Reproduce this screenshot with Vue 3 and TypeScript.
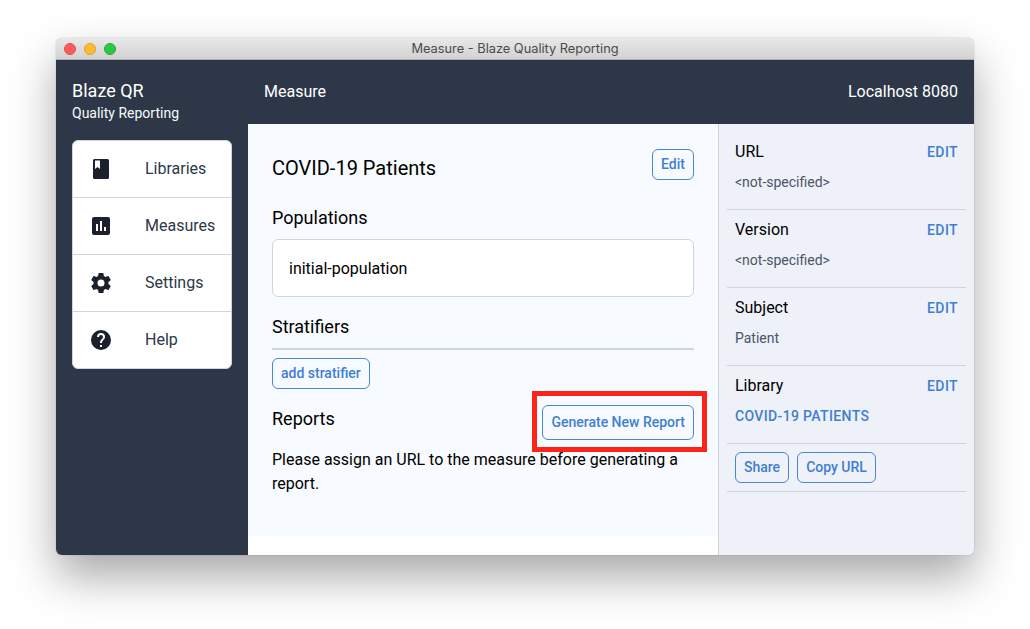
<script setup lang="ts">
const navItems = [
  { label: "Libraries", icon: "book" },
  { label: "Measures", icon: "chart" },
  { label: "Settings", icon: "cog" },
  { label: "Help", icon: "help" },
];

const fields = [
  { title: "URL", value: "<not-specified>", link: false },
  { title: "Version", value: "<not-specified>", link: false },
  { title: "Subject", value: "Patient", link: false },
  { title: "Library", value: "COVID-19 PATIENTS", link: true },
];
</script>

<template>
  <div class="page">
    <div class="window">
      <div class="titlebar">
        <div class="lights">
          <span class="light red"></span>
          <span class="light yellow"></span>
          <span class="light green"></span>
        </div>
        <span class="window-title">Measure - Blaze Quality Reporting</span>
      </div>

      <div class="app">
        <aside class="sidebar">
          <div class="brand">
            <div class="brand-name">Blaze QR</div>
            <div class="brand-sub">Quality Reporting</div>
          </div>
          <nav class="nav">
            <a v-for="item in navItems" :key="item.label" class="nav-item">
              <span class="nav-icon">
                <svg v-if="item.icon === 'book'" width="24" height="24" viewBox="0 0 24 24">
                  <path fill-rule="evenodd" d="M5.500 2h13A1.500 1.500 0 0 1 20 3.500v17a1.500 1.500 0 0 1-1.500 1.500h-13A1.500 1.500 0 0 1 4 20.500v-17A1.500 1.500 0 0 1 5.500 2zM6 3.500V12l2.500-2 2.500 2V3.500z" />
                </svg>
                <svg v-else-if="item.icon === 'chart'" width="24" height="24" viewBox="0 0 24 24">
                  <path fill-rule="evenodd" d="M5 3h14a2 2 0 0 1 2 2v14a2 2 0 0 1-2 2H5a2 2 0 0 1-2-2V5a2 2 0 0 1 2-2zm2 7v7h2v-7zm4-3v10h2V7zm4 6v4h2v-4z" />
                </svg>
                <svg v-else-if="item.icon === 'cog'" width="24" height="24" viewBox="0 0 24 24">
                  <path fill-rule="evenodd" d="M19.430 12.980c.04-.32.07-.64.07-.98s-.03-.66-.07-.98l2.110-1.650c.19-.15.24-.42.120-.64l-2-3.460c-.12-.22-.39-.30-.61-.22l-2.490 1c-.52-.40-1.080-.73-1.690-.98l-.38-2.650A.488.488 0 0 0 14 2h-4c-.25 0-.46.18-.49.42l-.38 2.650c-.61.25-1.170.59-1.690.98l-2.490-1c-.23-.09-.49 0-.61.22l-2 3.460c-.13.22-.07.49.12.64l2.110 1.650c-.04.32-.07.65-.07.98s.03.66.07.98l-2.110 1.650c-.19.15-.24.42-.12.64l2 3.460c.12.22.39.30.61.22l2.490-1c.52.40 1.080.73 1.690.98l.38 2.650c.03.24.24.42.49.42h4c.25 0 .46-.18.49-.42l.38-2.650c.61-.25 1.170-.59 1.690-.98l2.490 1c.23.09.49 0 .61-.22l2-3.460c.12-.22.07-.49-.12-.64zM12 15.500a3.500 3.500 0 1 1 0-7 3.500 3.500 0 0 1 0 7z" />
                </svg>
                <svg v-else width="24" height="24" viewBox="0 0 24 24">
                  <path d="M12 2a10 10 0 1 0 0 20 10 10 0 0 0 0-20zm1 17h-2v-2h2zm2.070-7.750-.9.920C13.450 12.900 13 13.500 13 15h-2v-.5c0-1.100.45-2.100 1.170-2.830l1.240-1.260A1.960 1.960 0 0 0 14 9a2 2 0 1 0-4 0H8a4 4 0 1 1 8 0c0 .88-.36 1.680-.93 2.250z" />
                </svg>
              </span>
              <span class="nav-label">{{ item.label }}</span>
            </a>
          </nav>
        </aside>

        <div class="content">
          <header class="topbar">
            <span class="page-name">Measure</span>
            <span class="server">Localhost 8080</span>
          </header>

          <div class="panes">
            <main class="main">
              <div class="main-inner">
                <div class="title-row">
                  <h1 class="title">COVID-19 Patients</h1>
                  <button class="btn edit-btn">Edit</button>
                </div>

                <h2 class="section pop-heading">Populations</h2>
                <div class="pop-box">initial-population</div>

                <h2 class="section strat-heading">Stratifiers</h2>
                <button class="btn add-btn">add stratifier</button>

                <div class="reports-row">
                  <h2 class="section reports-heading">Reports</h2>
                  <button class="btn report-btn">Generate New Report</button>
                </div>
                <p class="notice">Please assign an URL to the measure before generating a report.</p>
              </div>
              <div class="highlight"></div>
            </main>

            <aside class="details">
              <div v-for="field in fields" :key="field.title" class="field">
                <div class="field-head">
                  <span class="field-title">{{ field.title }}</span>
                  <a class="edit-link">EDIT</a>
                </div>
                <div :class="field.link ? 'field-link' : 'field-value'">{{ field.value }}</div>
              </div>
              <div class="actions">
                <button class="btn">Share</button>
                <button class="btn">Copy URL</button>
              </div>
            </aside>
          </div>
        </div>
      </div>
    </div>
  </div>
</template>

<style>
html,
body {
  margin: 0;
  background: #ffffff;
}
</style>

<style scoped>
.page {
  box-sizing: border-box;
  height: 629px;
  padding: 38px 56px 0;
  overflow: hidden;
}
.window {
  box-sizing: border-box;
  width: 918px;
  height: 517px;
  border-radius: 6px;
  overflow: hidden;
  display: flex;
  flex-direction: column;
  font-family: Roboto, "Liberation Sans", sans-serif;
  color: #000000;
  box-shadow: 0 22px 45px rgba(0, 0, 0, 0.34), 0 0 1px rgba(0, 0, 0, 0.5);
}
.titlebar {
  position: relative;
  flex: 0 0 22px;
  display: flex;
  align-items: center;
  justify-content: center;
  background: linear-gradient(#e8e8e8, #d2d2d2);
  border-bottom: 1px solid #b1b1b1;
  box-sizing: border-box;
}
.lights {
  position: absolute;
  left: 8px;
  top: 5px;
  display: flex;
  gap: 8px;
}
.light {
  width: 12px;
  height: 12px;
  border-radius: 50%;
  box-sizing: border-box;
}
.red {
  background: #fc5b5b;
  border: 1px solid #e04a4a;
}
.yellow {
  background: #fdbc2e;
  border: 1px solid #df9f26;
}
.green {
  background: #2bc840;
  border: 1px solid #24ab34;
}
.window-title {
  font-family: Inter, "Liberation Sans", sans-serif;
  font-size: 12.800px;
  color: #4a4a4a;
}
.app {
  flex: 1;
  display: flex;
  min-height: 0;
}
.sidebar {
  flex: 0 0 192px;
  box-sizing: border-box;
  background: #2d3748;
  padding: 0 16px;
}
.brand {
  height: 80px;
  padding-top: 19px;
  box-sizing: border-box;
  color: #ffffff;
}
.brand-name {
  font-size: 18px;
  font-weight: 400;
  line-height: 24px;
}
.brand-sub {
  font-size: 14px;
  line-height: 20px;
  color: #f7fafc;
}
.nav {
  background: #ffffff;
  border: 1px solid #cfd4e2;
  border-radius: 6px;
  overflow: hidden;
}
.nav-item {
  display: flex;
  align-items: center;
  height: 56px;
  border-bottom: 1px solid #cfd4e2;
  color: #1a202c;
}
.nav-item:last-child {
  border-bottom: none;
}
.nav-icon {
  display: flex;
  width: 72px;
  padding-left: 16px;
  box-sizing: border-box;
  fill: #1a202c;
}
.nav-label {
  padding-bottom: 2px;
  font-size: 16px;
  color: #2d3748;
}
.content {
  flex: 1;
  display: flex;
  flex-direction: column;
  min-width: 0;
}
.topbar {
  flex: 0 0 64px;
  box-sizing: border-box;
  display: flex;
  align-items: center;
  justify-content: space-between;
  padding: 0 16px 2px;
  background: #2d3748;
  color: #ffffff;
  font-size: 16px;
  font-weight: 400;
}
.panes {
  flex: 1;
  display: flex;
  min-height: 0;
}
.main {
  position: relative;
  flex: 0 0 470px;
  background: #ffffff;
}
.main-inner {
  box-sizing: border-box;
  height: 412px;
  padding: 24px;
  background: #f7fafe;
}
.title-row {
  display: flex;
  align-items: flex-start;
  justify-content: space-between;
}
.title {
  margin: 0;
  font-size: 20px;
  font-weight: 400;
  line-height: 40px;
}
.edit-btn {
  margin-top: 1px;
  height: 30px;
}
.section {
  margin: 0;
  font-size: 18px;
  font-weight: 400;
  line-height: 24px;
}
.pop-heading {
  margin-top: 18px;
}
.pop-box {
  box-sizing: border-box;
  height: 58px;
  margin-top: 9px;
  padding: 0 16px;
  display: flex;
  align-items: center;
  background: #ffffff;
  border: 1px solid #cfd4e2;
  border-radius: 6px;
  font-size: 16px;
}
.strat-heading {
  margin-top: 18px;
  padding-bottom: 9px;
  border-bottom: 2px solid #cfd4e2;
}
.btn {
  box-sizing: border-box;
  height: 31px;
  padding: 0 8px 2px;
  background: transparent;
  border: 1px solid #4a86d3;
  border-radius: 6px;
  font-family: inherit;
  font-size: 14px;
  font-weight: 500;
  color: #3f7fd0;
}
.add-btn {
  display: block;
  margin-top: 8px;
}
.reports-row {
  display: flex;
  align-items: flex-start;
  justify-content: space-between;
  margin-top: 16px;
}
.reports-heading {
  margin-top: 2px;
}
.report-btn {
  height: 35px;
}
.notice {
  margin: 8px 0 0;
  font-size: 16px;
  line-height: 24px;
}
.highlight {
  position: absolute;
  left: 284px;
  top: 267px;
  width: 175px;
  height: 61px;
  box-sizing: border-box;
  border: 5px solid #fc2419;
}
.details {
  flex: 1;
  box-sizing: border-box;
  padding: 0 8px;
  background: #eef1f7;
  border-left: 1px solid #cfd4e2;
}
.field {
  box-sizing: border-box;
  height: 78px;
  padding: 7px 8px 0;
  border-bottom: 1px solid #cfd4e2;
}
.field:first-child {
  height: 86px;
  padding-top: 15px;
}
.field-head {
  display: flex;
  align-items: center;
  justify-content: space-between;
  height: 24px;
  font-size: 16px;
  font-weight: 400;
}
.edit-link {
  margin-top: 2px;
  font-size: 14px;
  font-weight: 500;
  letter-spacing: 0.4px;
  color: #3f7fd0;
}
.field-value {
  margin-top: 9px;
  font-size: 14px;
  line-height: 20px;
  color: #4a5568;
}
.field-link {
  margin-top: 9px;
  font-size: 14px;
  line-height: 20px;
  font-weight: 500;
  letter-spacing: 0.35px;
  color: #3f7fd0;
}
.actions {
  display: flex;
  gap: 8px;
  height: 48px;
  align-items: center;
  padding: 0 8px;
  box-sizing: border-box;
  border-bottom: 1px solid #cfd4e2;
}
</style>
